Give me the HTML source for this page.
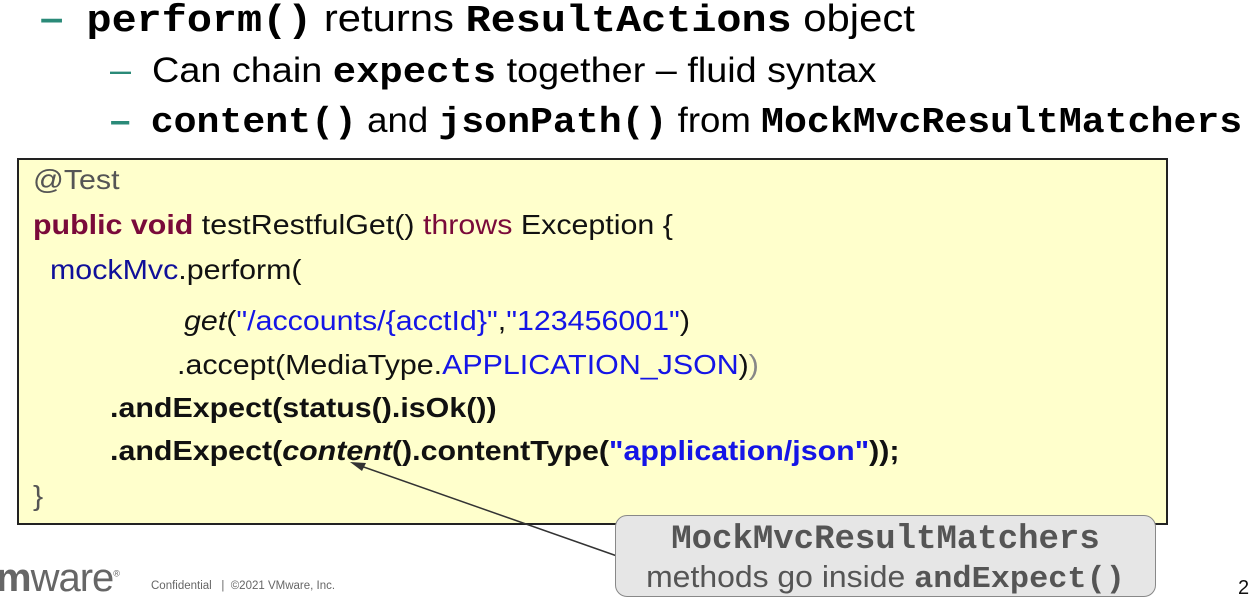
<!DOCTYPE html>
<html><head><meta charset="utf-8"><style>
body{margin:0;width:1249px;height:603px;background:#fff;position:relative;overflow:hidden;font-family:"Liberation Sans",Arial,sans-serif}
.a{position:absolute;white-space:nowrap;line-height:1;transform-origin:0 0}
.m{font-family:"Liberation Mono","Courier New",monospace;font-weight:bold}
.d{color:#2a8a78}
.box{position:absolute;left:17px;top:158px;width:1151px;height:367px;background:#ffffcc;border:2px solid #222;box-sizing:border-box}
.c{font-size:28px;color:#111;transform:scaleX(1.085)}
.k{color:#7a0a3a;font-weight:bold}
.b{color:#1515e6}
.nv{color:#10109a}
.call{position:absolute;left:615px;top:515px;width:541px;height:82px;background:#e6e6e6;border:1.5px solid #888;border-radius:12px;box-sizing:border-box;color:#555;text-align:center}
</style></head><body>
<div class="a" style="left:40px;top:0px;font-size:38px;transform:scaleX(1.1)"><span class="d" style="font-weight:bold">–</span>&nbsp;&nbsp;<span class="m">perform()</span> returns <span class="m">ResultActions</span> object</div>
<div class="a" style="left:110px;top:53px;font-size:35px;transform:scaleX(1.08)"><span class="d">–</span>&nbsp; Can chain <span class="m" style="font-size:36px">expects</span> together – fluid syntax</div>
<div class="a" style="left:110px;top:103px;font-size:35px;transform:scaleX(1.046)"><span class="d" style="font-weight:bold">–</span>&nbsp; <span class="m" style="font-size:36.5px">content()</span> and <span class="m" style="font-size:36.5px">jsonPath()</span> from <span class="m" style="font-size:36.5px">MockMvcResultMatchers</span></div>
<div class="box"></div>
<div class="a c" style="left:33px;top:166px;color:#555">@Test</div>
<div class="a c" style="left:33px;top:211px"><span class="k">public void</span> testRestfulGet() <span style="color:#7a0a3a">throws</span> Exception {</div>
<div class="a c" style="left:50px;top:256px"><span class="nv">mockMvc</span>.perform(</div>
<div class="a c" style="left:184px;top:307px"><i>get</i>(<span class="b">"/accounts/{acctId}"</span>,<span class="b">"123456001"</span>)</div>
<div class="a c" style="left:177px;top:351px">.accept(MediaType.<span class="b">APPLICATION_JSON</span>)<span style="color:#888">)</span></div>
<div class="a c" style="left:110px;top:394px;font-weight:bold">.andExpect(status().isOk())</div>
<div class="a c" style="left:110px;top:437px;font-weight:bold">.andExpect(<i>content</i>().contentType(<span class="b">"application/json"</span>));</div>
<div class="a c" style="left:33px;top:482px;color:#555">}</div>
<svg style="position:absolute;left:0;top:0" width="1249" height="603"><line x1="617" y1="556" x2="358" y2="465" stroke="#333" stroke-width="1.5"/><polygon points="350,462 366,463 362,471" fill="#333"/></svg>
<div class="call"><div class="m" style="font-size:34px;margin-top:5px;color:#555">MockMvcResultMatchers</div><div style="font-size:31px;margin-top:0px;transform:scaleX(1.03)">methods go inside <span class="m" style="font-size:31px">andExpect()</span></div></div>
<div class="a" style="left:-4px;top:558px;font-size:40px;color:#666;letter-spacing:-1px"><b>m</b>ware<sup style="font-size:9px">®</sup></div>
<div class="a" style="left:151px;top:581px;font-size:11.5px;color:#666">Confidential &nbsp; | &nbsp;©2021 VMware, Inc.</div>
<div class="a" style="left:1238px;top:578px;font-size:20px;color:#111">2</div>
</body></html>
